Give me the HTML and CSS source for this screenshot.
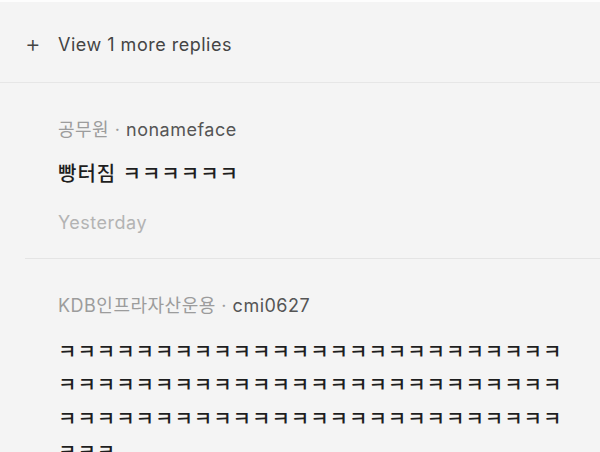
FILE: index.html
```html
<!DOCTYPE html>
<html lang="ko">
<head>
    <meta charset="UTF-8">
    <meta name="viewport" content="width=device-width, initial-scale=1.0">
    <title>Replies</title>
    <link rel="stylesheet" href="styles.css">
</head>
<body>
    <div class="thread">
        <div class="more">
            <span class="plus">+</span>
            <span class="more-label">View 1 more replies</span>
        </div>

        <div class="reply">
            <p class="meta"><span class="org">공무원 · </span><span class="user">nonameface</span></p>
            <p class="text">빵터짐 ㅋㅋㅋㅋㅋㅋ</p>
            <p class="date">Yesterday</p>
        </div>

        <div class="reply last">
            <p class="meta"><span class="org">KDB인프라자산운용 · </span><span class="user">cmi0627</span></p>
            <p class="text long">ㅋㅋㅋㅋㅋㅋㅋㅋㅋㅋㅋㅋㅋㅋㅋㅋㅋㅋㅋㅋㅋㅋㅋㅋㅋㅋㅋㅋㅋㅋㅋㅋㅋㅋㅋㅋㅋㅋㅋㅋㅋㅋㅋㅋㅋㅋㅋㅋㅋㅋㅋㅋㅋㅋㅋㅋㅋㅋㅋㅋㅋㅋㅋㅋㅋㅋㅋㅋㅋㅋㅋㅋㅋㅋㅋㅋㅋㅋㅋㅋㅋ</p>
        </div>
    </div>
</body>
</html>
```

FILE: styles.css
```css
body { margin: 0; background: #f4f4f4; font-family: Inter, "Noto Sans CJK KR", sans-serif; border-top: 2px solid #fdfdfd; }
.thread { width: 600px; }
.more { display: flex; align-items: center; height: 76px; padding: 4px 0 0 25px; border-bottom: 1px solid #e6e6e6; color: #444; }
.plus { width: 33px; font-size: 24px; font-weight: 300; line-height: 1; }
.more-label { font-size: 18px; letter-spacing: 0.5px; }
.reply { margin-left: 25px; padding: 35px 25px 23px 33px; border-bottom: 1px solid #e4e4e4; }
.reply.last { border-bottom: none; }
.meta { margin: 0; font-size: 18px; line-height: 24px; letter-spacing: 0.5px; }
.org { color: #9c9c9c; }
.user { color: #555; }
.text { margin: 18px 0 0; font-size: 20px; font-weight: 500; line-height: 28px; letter-spacing: 1px; color: #1e1e1e; word-break: break-all; }
.text.long { margin-top: 18px; line-height: 33.3px; }
.date { margin: 23px 0 0; font-size: 18px; line-height: 24px; letter-spacing: 0.5px; color: #b3b3b3; }
```
